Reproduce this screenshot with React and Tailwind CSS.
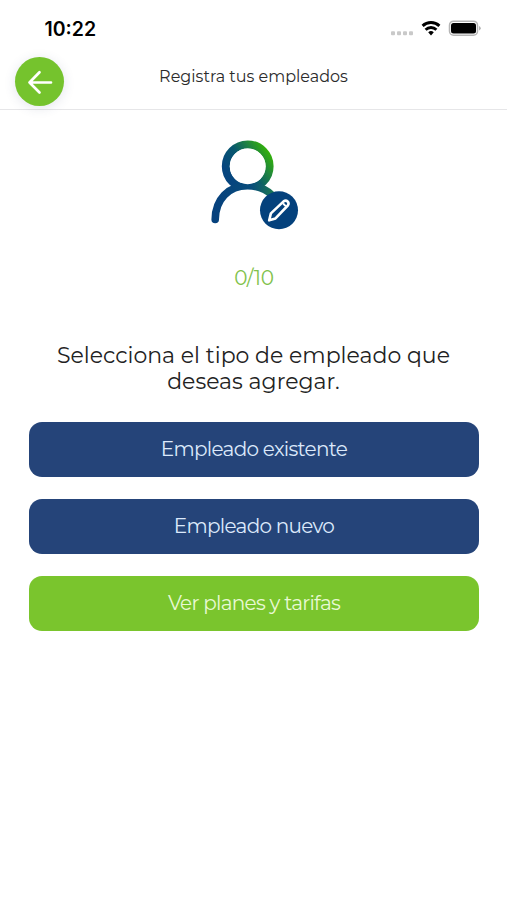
const options = [
  { label: "Empleado existente", box: "bg-[#254479] text-[#dce9fb]" },
  { label: "Empleado nuevo", box: "bg-[#254479] text-[#dce9fb]" },
  { label: "Ver planes y tarifas", box: "bg-[#7ac52d] text-[#e9f9d4]" },
];

function StatusBar() {
  return (
    <div className="h-14 pl-[44.5px] pr-[26px] flex items-center justify-between">
      <span className="pt-0.5 font-['Inter',sans-serif] text-[19.5px] leading-6 font-semibold text-black">
        10:22
      </span>
      <svg width="91" height="18" viewBox="0 0 91 18" className="block">
        <g fill="#c9c9c9">
          <rect x="1" y="12.3" width="4" height="4" rx="1" />
          <rect x="7" y="12.3" width="4" height="4" rx="1" />
          <rect x="13" y="12.3" width="4" height="4" rx="1" />
          <rect x="19" y="12.3" width="4" height="4" rx="1" />
        </g>
        <g fill="none" stroke="#000" strokeWidth="2.9">
          <path d="M32.6 6.9a12.2 12.2 0 0 1 16.8 0" />
          <path d="M35.6 10.7a7.8 7.8 0 0 1 10.8 0" />
        </g>
        <path d="M38.2 13.3a4.2 4.2 0 0 1 5.6 0L41 16.4z" fill="#000" />
        <rect
          x="59.5"
          y="2.2"
          width="28"
          height="14"
          rx="4"
          fill="none"
          stroke="#b5b5b5"
          strokeWidth="1.5"
        />
        <rect x="61" y="3.9" width="25" height="10.6" rx="2.5" fill="#000" />
        <path d="M89 6.9v4.6q1.8-.7 1.8-2.3T89 6.9z" fill="#b5b5b5" />
      </svg>
    </div>
  );
}

function Header() {
  return (
    <header className="h-[54px] px-[15px] grid grid-cols-[49px_1fr_49px] items-start border-b border-[#e6e6e8]">
      <button
        aria-label="Regresar"
        className="size-[49px] mt-px rounded-full bg-[#75c32d] flex items-center justify-center shadow-[0_2px_12px_rgba(60,70,110,0.14)]"
      >
        <svg
          width="26"
          height="26"
          viewBox="0 0 26 26"
          fill="none"
          stroke="#fff"
          strokeWidth="2.7"
          strokeLinecap="round"
          strokeLinejoin="round"
        >
          <path d="M24 13.5H2.5M12.5 3.2L2.5 13.5l10 10" />
        </svg>
      </button>
      <h1 className="pt-[9px] text-center text-[16px] leading-6 text-[#2b2b2b]">
        Registra tus empleados
      </h1>
    </header>
  );
}

function EmployeeIcon() {
  return (
    <svg width="90" height="92" viewBox="0 0 90 92" className="block">
      <defs>
        <linearGradient
          id="person"
          gradientUnits="userSpaceOnUse"
          x1="24"
          y1="42"
          x2="63"
          y2="15"
        >
          <stop offset="0" stopColor="#06457f" />
          <stop offset="0.4" stopColor="#08586e" />
          <stop offset="0.7" stopColor="#1f8440" />
          <stop offset="1" stopColor="#35b505" />
        </linearGradient>
        <linearGradient
          id="shoulders"
          gradientUnits="userSpaceOnUse"
          x1="6"
          y1="0"
          x2="66"
          y2="0"
        >
          <stop offset="0" stopColor="#06417d" />
          <stop offset="0.6" stopColor="#084c7b" />
          <stop offset="1" stopColor="#1c7b50" />
        </linearGradient>
      </defs>
      <circle
        cx="38.7"
        cy="27.3"
        r="21.9"
        fill="none"
        stroke="url(#person)"
        strokeWidth="8"
      />
      <path
        d="M6.2 80.5C6.4 60.5 19.5 46.8 38.5 46.8C49 46.8 58 50.6 64 57"
        fill="#fff"
        stroke="url(#shoulders)"
        strokeWidth="7.6"
        strokeLinecap="round"
      />
      <circle cx="38.7" cy="27.3" r="17.9" fill="#fff" />
      <circle cx="70" cy="71.3" r="19" fill="#04417c" />
      <g
        fill="none"
        stroke="#fff"
        strokeWidth="2.6"
        strokeLinecap="round"
        strokeLinejoin="round"
      >
        <path d="M60.2 81.3l1.7-6.9L74.6 62.4q2.2-1.6 4 .1t.2 4L66.5 79.4z" />
        <path d="M74.6 65l1.6 1.6" strokeWidth="2" />
      </g>
    </svg>
  );
}

function App() {
  return (
    <div className="w-full h-[900px] bg-white font-['Montserrat','Inter',sans-serif] overflow-hidden">
      <StatusBar />
      <Header />
      <main className="pl-[29px] pr-7 pt-[29px] flex flex-col items-center">
        <EmployeeIcon />
        <p className="mt-[35px] text-[20px] leading-6 tracking-[-0.3px] text-[#82c24c]">
          0/10
        </p>
        <h2 className="mt-[53px] -ml-px text-center text-[22px] leading-[26px] text-[#222]">
          Selecciona el tipo de empleado que
          <br />
          deseas agregar.
        </h2>
        <div className="w-full mt-[27px] flex flex-col gap-[22px]">
          {options.map(({ label, box }) => (
            <button
              key={label}
              className={`h-[55px] w-full pb-0.5 rounded-[13px] text-[20px] leading-6 tracking-[-0.72px] ${box}`}
            >
              {label}
            </button>
          ))}
        </div>
      </main>
    </div>
  );
}

export default App;
